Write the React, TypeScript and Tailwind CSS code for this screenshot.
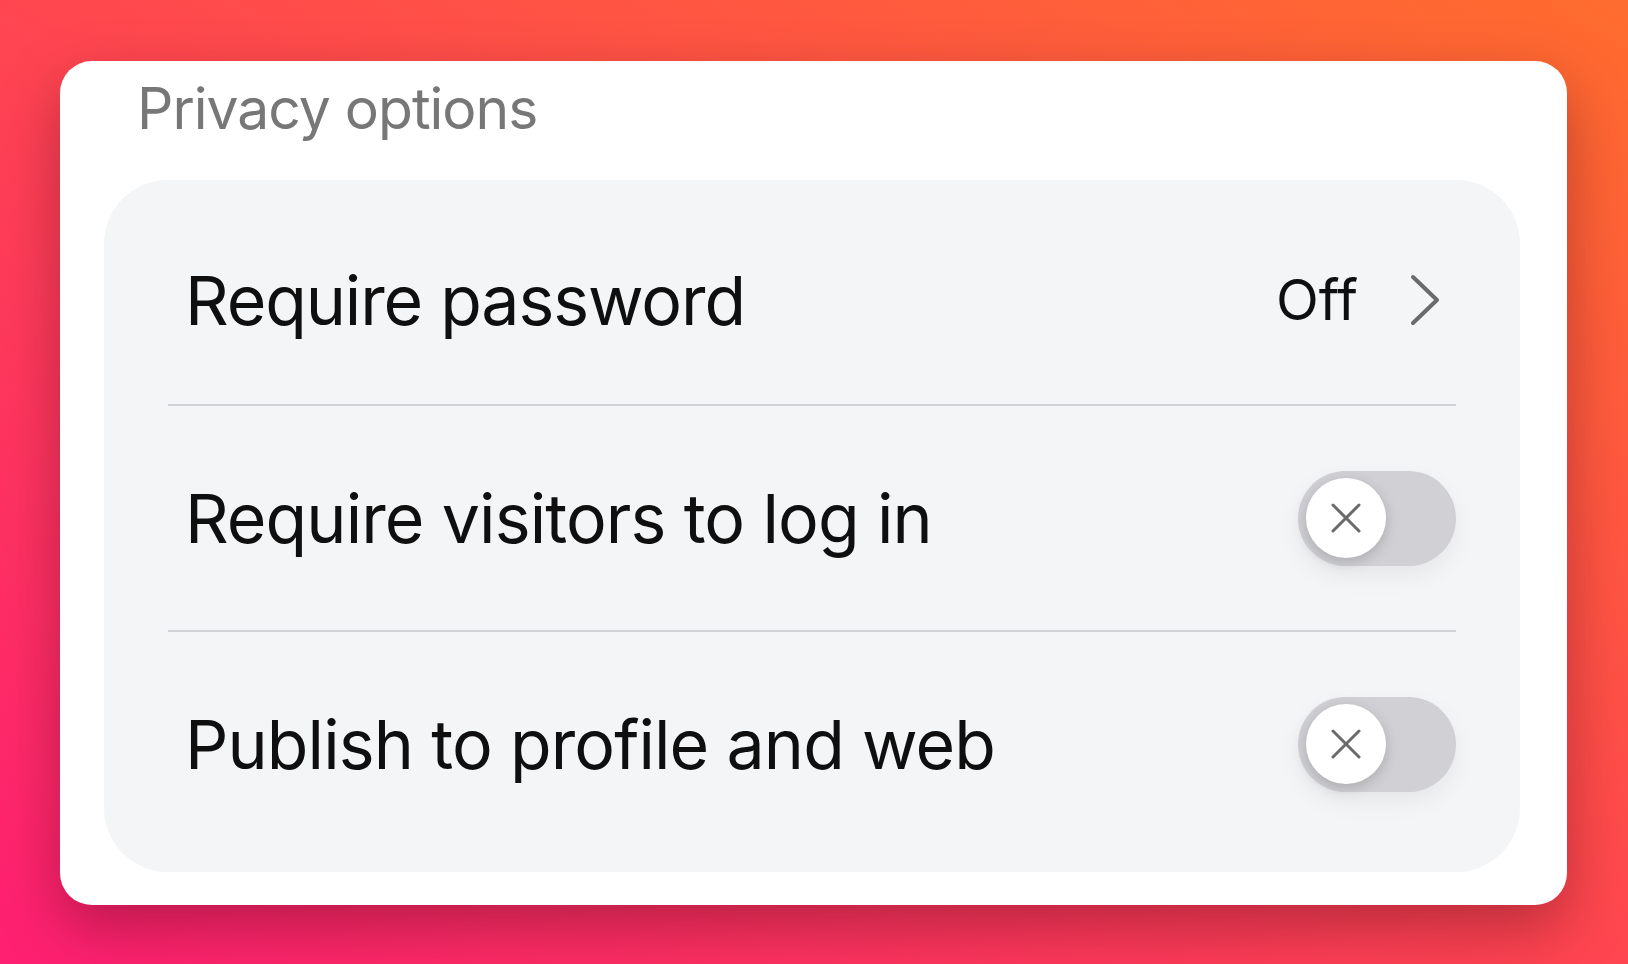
import React from "react";

function XIcon() {
  return (
    <svg width="30" height="30" viewBox="0 0 30 30" fill="none">
      <line x1="2" y1="2" x2="28" y2="28" stroke="#6b6b6b" strokeWidth="3" strokeLinecap="round" />
      <line x1="28" y1="2" x2="2" y2="28" stroke="#6b6b6b" strokeWidth="3" strokeLinecap="round" />
    </svg>
  );
}

function Toggle() {
  return (
    <div className="w-[158px] h-[95px] rounded-full bg-[#d1d1d5] p-[8px] flex items-center shadow-[0_10px_24px_rgba(0,0,0,0.06)]">
      <div className="w-[80px] h-[80px] rounded-full bg-white flex items-center justify-center shadow-[0_4px_14px_rgba(0,0,0,0.18)]">
        <XIcon />
      </div>
    </div>
  );
}

function Chevron() {
  return (
    <svg width="30" height="52" viewBox="0 0 30 52" fill="none">
      <polyline points="3,3 27,26 3,49" stroke="#6b6b6b" strokeWidth="4" strokeLinecap="round" strokeLinejoin="round" fill="none" />
    </svg>
  );
}

export default function App() {
  return (
    <div
      className="w-[1628px] h-[964px] pt-[61px] pl-[60px] bg-[linear-gradient(to_top_right,#ff1f72_0%,#ff4650_50%,#ff6c2e_100%)] overflow-hidden"
      style={{ fontFamily: "Inter, 'Noto Sans', sans-serif" }}
    >
      <div className="w-[1507px] h-[844px] bg-white rounded-[32px] shadow-[0_24px_60px_rgba(60,0,20,0.35)] flex flex-col">
        <div className="pl-[77px] pt-[19px] text-[57px] leading-none text-[#777777] tracking-[-1px]">
          Privacy options
        </div>
        <div className="ml-[44px] mt-[43px] w-[1416px] h-[692px] bg-[#f4f5f7] rounded-[64px] px-[64px] py-[16px] flex flex-col">
          <div className="h-[208px] flex items-center justify-between pl-[17px]">
            <span className="text-[68px] text-[#0f0f0f] tracking-[-1.1px]">Require password</span>
            <div className="flex items-center gap-[52px] pr-[16px]">
              <span className="text-[56px] text-[#0f0f0f]">Off</span>
              <Chevron />
            </div>
          </div>
          <div className="h-[2px] bg-[#d2d2d6]" />
          <div className="h-[224px] flex items-center justify-between pl-[17px]">
            <span className="text-[68px] text-[#0f0f0f] tracking-[-0.9px]">Require visitors to log in</span>
            <Toggle />
          </div>
          <div className="h-[2px] bg-[#d2d2d6]" />
          <div className="h-[224px] flex items-center justify-between pl-[17px]">
            <span className="text-[68px] text-[#0f0f0f] tracking-[-0.9px]">Publish to profile and web</span>
            <Toggle />
          </div>
        </div>
      </div>
    </div>
  );
}
